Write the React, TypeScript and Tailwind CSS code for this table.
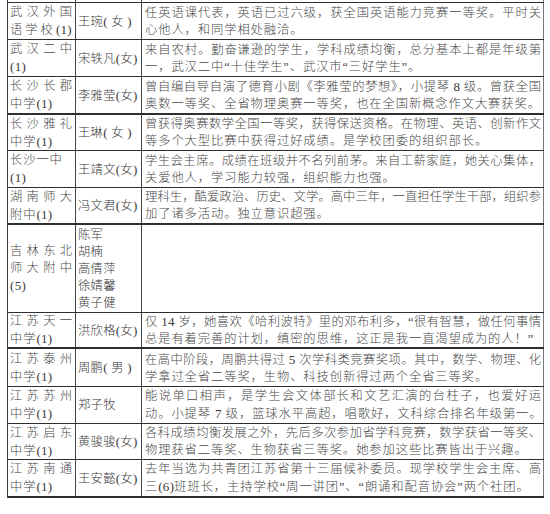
import React from "react";

type Row = {
  hc: string;
  thick: boolean;
  c1: [string, boolean][];
  c2: string[];
  c3: string[];
};

const rows: Row[] = [
  {
    hc: "h-[37px]",
    thick: false,
    c1: [["武汉外国", true], ["语学校(1)", true]],
    c2: ["王琬( 女 )"],
    c3: ["任英语课代表，英语已过六级，获全国英语能力竞赛一等奖。平时关", "心他人，和同学相处融洽。"],
  },
  {
    hc: "h-[37px]",
    thick: false,
    c1: [["武汉二中", true], ["(1)", false]],
    c2: ["宋轶凡(女)"],
    c3: ["来自农村。勤奋谦逊的学生，学科成绩均衡，总分基本上都是年级第", "一，武汉二中“十佳学生”、武汉市“三好学生”。"],
  },
  {
    hc: "h-[38px]",
    thick: true,
    c1: [["长沙长郡", true], ["中学(1)", false]],
    c2: ["李雅莹(女)"],
    c3: ["曾自编自导自演了德育小剧《李雅莹的梦想》，小提琴 8 级。曾获全国", "奥数一等奖、全省物理奥赛一等奖，也在全国新概念作文大赛获奖。"],
  },
  {
    hc: "h-[36px]",
    thick: false,
    c1: [["长沙雅礼", true], ["中学(1)", false]],
    c2: ["王琳( 女 )"],
    c3: ["曾获得奥赛数学全国一等奖，获得保送资格。在物理、英语、创新作文", "等多个大型比赛中获得过好成绩。是学校团委的组织部长。"],
  },
  {
    hc: "h-[37px]",
    thick: false,
    c1: [["长沙一中", false], ["(1)", false]],
    c2: ["王靖文(女)"],
    c3: ["学生会主席。成绩在班级并不名列前茅。来自工薪家庭，她关心集体，", "关爱他人，学习能力较强，组织能力也强。"],
  },
  {
    hc: "h-[37px]",
    thick: true,
    c1: [["湖南师大", true], ["附中(1)", false]],
    c2: ["冯文君(女)"],
    c3: ["理科生，酷爱政治、历史、文学。高中三年，一直担任学生干部，组织参", "加了诸多活动。独立意识超强。"],
  },
  {
    hc: "h-[88px]",
    thick: false,
    c1: [["吉林东北", true], ["师大附中", true], ["(5)", false]],
    c2: ["陈军", "胡楠", "高倩萍", "徐婧馨", "黄子健"],
    c3: [],
  },
  {
    hc: "h-[36px]",
    thick: true,
    c1: [["江苏天一", true], ["中学(1)", false]],
    c2: ["洪欣格(女)"],
    c3: ["仅 14 岁，她喜欢《哈利波特》里的邓布利多，“很有智慧，做任何事情", "总是有着完善的计划，缜密的思维，这正是我一直渴望成为的人！”"],
  },
  {
    hc: "h-[38px]",
    thick: false,
    c1: [["江苏泰州", true], ["中学(1)", false]],
    c2: ["周鹏( 男 )"],
    c3: ["在高中阶段，周鹏共得过 5 次学科类竞赛奖项。其中，数学、物理、化", "学拿过全省二等奖，生物、科技创新得过两个全省三等奖。"],
  },
  {
    hc: "h-[37px]",
    thick: false,
    c1: [["江苏苏州", true], ["中学(1)", false]],
    c2: ["郑子牧"],
    c3: ["能说单口相声，是学生会文体部长和文艺汇演的台柱子，也爱好运", "动。小提琴 7 级，篮球水平高超，唱歌好，文科综合排名年级第一。"],
  },
  {
    hc: "h-[36px]",
    thick: false,
    c1: [["江苏启东", true], ["中学(1)", false]],
    c2: ["黄骏骏(女)"],
    c3: ["各科成绩均衡发展之外，先后多次参加省学科竞赛，数学获省一等奖、", "物理获省二等奖、生物获省三等奖。她参加这些比赛皆出于兴趣。"],
  },
  {
    hc: "h-[38px]",
    thick: true,
    c1: [["江苏南通", true], ["中学(1)", false]],
    c2: ["王安懿(女)"],
    c3: ["去年当选为共青团江苏省第十三届候补委员。现学校学生会主席、高", "三(6)班班长，主持学校“周一讲团”、“朗诵和配音协会”两个社团。"],
  },
];

function Rich({ text }: { text: string }) {
  const parts = text.split(/([0-9()]+)/);
  return (
    <>
      {parts.map((p, i) =>
        /^[0-9()]+$/.test(p) ? (
          <span key={i} className="text-[13px] tracking-[0.3px] text-[#3a3a3a]">
            {p}
          </span>
        ) : (
          <React.Fragment key={i}>{p}</React.Fragment>
        )
      )}
    </>
  );
}

function Line({ text, justify, track }: { text: string; justify: boolean; track: boolean }) {
  const cls = justify
    ? "whitespace-nowrap text-justify [text-align-last:justify]"
    : track
    ? "whitespace-nowrap text-left tracking-[0.9px]"
    : "whitespace-nowrap text-left";
  return (
    <div className={cls}>
      <Rich text={text} />
    </div>
  );
}

export default function App() {
  return (
    <div
      className="min-h-[514px] w-[550px] bg-white pl-[7px] text-[12.3px] font-light leading-[17px] text-[#484848]"
      style={{ fontFamily: '"Liberation Serif", "Noto Sans CJK SC", serif' }}
    >
      <div className="w-[537px] border-l border-[#3a3a3a]">
        <div className="flex h-[3px] border-b border-[#2e2e2e]">
          <div className="w-[68px] border-r border-[#444]" />
          <div className="w-[66px] border-r border-[#444]" />
          <div className="w-[402px] border-r border-[#777]" />
        </div>
        {rows.map((r, i) => (
          <div
            key={i}
            className={`flex ${r.hc} ${r.thick ? "border-b-2" : "border-b"} border-[#2e2e2e]`}
          >
            <div className="flex w-[68px] flex-col justify-center border-r border-[#444] pl-[2px] pr-[3px] pt-[1px]">
              {r.c1.map(([t, j], k) => (
                <Line key={k} text={t} justify={j} track={true} />
              ))}
            </div>
            <div className="flex w-[66px] flex-col justify-center border-r border-[#444] pl-[2px] pt-[1px] text-[12.3px] tracking-[0.3px] text-[#3a3a3a]">
              {r.c2.map((t, k) => (
                <div key={k} className="whitespace-nowrap">
                  <Rich text={t} />
                </div>
              ))}
            </div>
            <div className="flex w-[402px] flex-col justify-center border-r border-[#777] pl-[3px] pr-[2px] pt-[1px]">
              {r.c3.map((t, k) => (
                <Line key={k} text={t} justify={k === 0} track={true} />
              ))}
            </div>
          </div>
        ))}
      </div>
    </div>
  );
}
